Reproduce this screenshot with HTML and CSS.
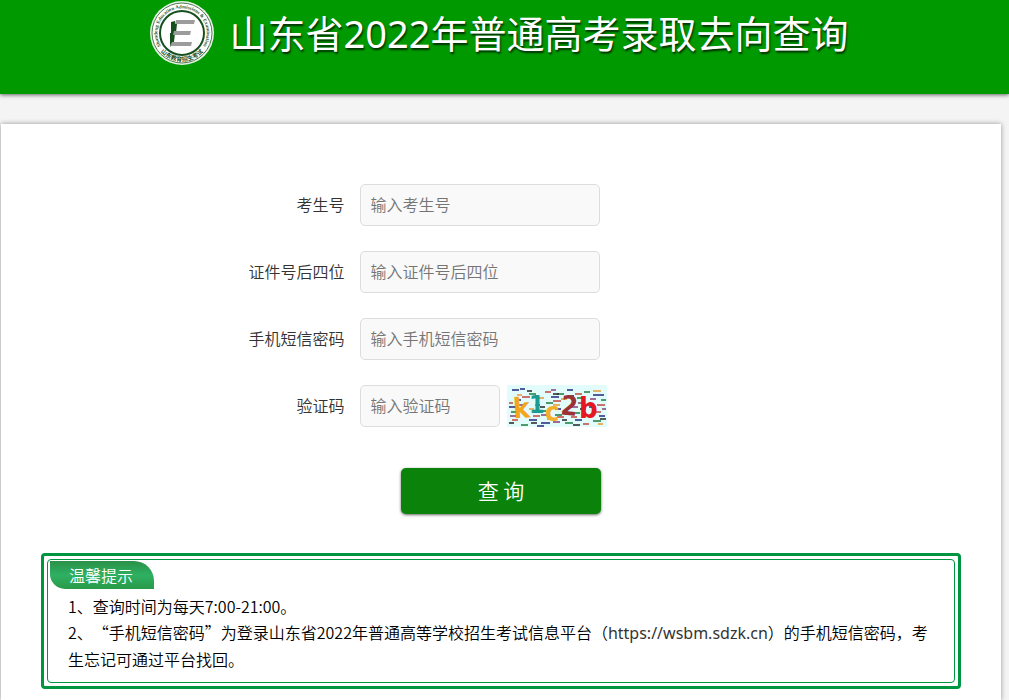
FILE: index.html
```html
<!DOCTYPE html>
<html lang="zh-CN">
<head>
    <meta charset="UTF-8">
    <meta name="viewport" content="width=device-width, initial-scale=1.0">
    <title>山东省2022年普通高考录取去向查询</title>
    <link rel="stylesheet" href="styles.css">
</head>
<body>
    <header class="header">
        <div class="header-inner">
            <svg class="logo" viewBox="0 0 66 66" aria-hidden="true">
                <defs>
                    <path id="ringTop" d="M12 46 A24.700 24.700 0 1 1 54 46"/>
                    <path id="ringBottom" d="M6 42 A28.500 28.500 0 0 0 60 42"/>
                </defs>
                <circle cx="33" cy="33" r="32" fill="#e9f3e9"/>
                <circle cx="33" cy="33" r="30" fill="#fff" stroke="#4c7a50" stroke-width="1"/>
                <circle cx="33" cy="33" r="22" fill="#fff" stroke="#17501f" stroke-width="2"/>
                <text class="logo-en"><textPath href="#ringTop" startOffset="50%" text-anchor="middle">Shandong Education Admissions &amp; Examination</textPath></text>
                <text class="logo-cn"><textPath href="#ringBottom" startOffset="50%" text-anchor="middle">山东教育招生考试</textPath></text>
                <path fill="#17501f" d="M22 22l4-1v3h2l-1 9h-5zM21 33h5l-1 9-4 5z"/>
                <path fill="#9c9c9c" d="M27 20h19l-1 4H26zM25 31h17l-1 4H24zM23 42h20l-1 4H21z"/>
            </svg>
            <h1>山东省2022年普通高考录取去向查询</h1>
        </div>
    </header>

    <main class="container">
        <form class="query-form">
            <div class="form-group">
                <label for="ksh">考生号</label>
                <input type="text" id="ksh" placeholder="输入考生号">
            </div>
            <div class="form-group">
                <label for="zjh">证件号后四位</label>
                <input type="text" id="zjh" placeholder="输入证件号后四位">
            </div>
            <div class="form-group">
                <label for="dxmm">手机短信密码</label>
                <input type="password" id="dxmm" placeholder="输入手机短信密码">
            </div>
            <div class="form-group">
                <label for="yzm">验证码</label>
                <input type="text" id="yzm" class="short" placeholder="输入验证码">
                <svg class="captcha" viewBox="0 0 100 42" role="img" aria-label="验证码">
                    <rect width="100" height="42" fill="#e2fcfc"/>
                    <g fill="none" stroke-width="1.500">
                        <path stroke="#26267a" d="M5 5h7M13 4h5M86 10h11M60 5h6M2 22h7M22 35h8M68 35h7M92 31h6M34 38h9M82 22h7M9 15h5M44 12h8M48 24h6M30 41h7"/>
                        <path stroke="#1d7a3c" d="M22 9h7M50 9h7M77 7h6M4 27h6M30 26h9M66 28h7M14 40h7M58 38h8M86 36h8M39 18h7M94 15h5M70 13h6M48 30h7"/>
                        <path stroke="#c2463c" d="M15 12h8M38 7h6M68 9h7M90 20h8M5 35h6M50 32h7M26 31h7M76 39h6M88 27h6M2 18h4M46 16h8M64 32h6"/>
                        <path stroke="#8a3b75" d="M44 5h5M10 20h6M63 22h8M46 37h7M83 14h6M3 31h7M71 18h5M28 20h5M95 24h4M34 30h6"/>
                        <path stroke="#e39a30" d="M31 13h6M54 14h6M10 10h5M40 34h6M75 31h7M91 39h5M22 24h5M86 6h8M46 20h7"/>
                        <path stroke="#252525" d="M20 6h5M46 9h6M61 11h6M33 22h5M2 38h5M24 38h6M55 35h5M93 34h6M73 24h6M66 40h7"/>
                    </g>
                    <g class="captcha-text">
                        <text x="6" y="33" fill="#f5a51c" font-size="28" transform="rotate(-4 12 24)">k</text>
                        <text x="22" y="28" fill="#1c9a91" font-size="25">1</text>
                        <text x="38" y="36" fill="#f5ae28" font-size="27">c</text>
                        <text x="54" y="30" fill="#9b3035" font-size="27" transform="rotate(6 60 20)">2</text>
                        <text x="72" y="33" fill="#e31822" font-size="29">b</text>
                    </g>
                </svg>
            </div>
            <button type="submit" class="submit-btn">查 询</button>
        </form>

        <section class="tips">
            <div class="tips-inner">
                <h2>温馨提示</h2>
                <p>1、查询时间为每天7:00-21:00。</p>
                <p>2、“手机短信密码”为登录山东省2022年普通高等学校招生考试信息平台（<a href="https://wsbm.sdzk.cn">https://wsbm.sdzk.cn</a>）的手机短信密码，考生忘记可通过平台找回。</p>
            </div>
        </section>
    </main>
</body>
</html>
```
FILE: styles.css
```css
* {
    box-sizing: border-box;
}

body {
    margin: 0;
    min-height: 100vh;
    display: flex;
    flex-direction: column;
    background: #f4f4f4;
    color: #000;
    font-family: "Noto Sans CJK SC", sans-serif;
    font-size: 16px;
    font-weight: 350;
    text-spacing-trim: space-all;
}

.header {
    background: #009900;
    padding: 0 12px 28px 0;
    box-shadow: 0 1px 4px rgba(0, 0, 0, 0.6);
}

.header-inner {
    max-width: 1000px;
    height: 66px;
    margin: 0 auto;
    display: flex;
    justify-content: center;
    align-items: center;
    gap: 15px;
}

.logo {
    width: 66px;
    height: 66px;
    flex: none;
}

.logo-en {
    font-family: "Liberation Serif", serif;
    font-size: 5px;
    font-weight: bold;
    fill: #2c5c31;
}

.logo-cn {
    font-size: 6px;
    font-weight: bold;
    fill: #17501f;
}

h1 {
    margin: 0;
    color: #fff;
    font-family: "Noto Sans", "Noto Sans CJK SC", sans-serif;
    font-size: 38px;
    font-weight: 400;
    line-height: 66px;
    white-space: nowrap;
    text-shadow: 1px 2px 2px rgba(0, 0, 0, 0.7);
}

.container {
    flex: 1;
    width: calc(100% - 9px);
    max-width: 1000px;
    margin: 30px auto 0;
    padding: 60px 40px 11px;
    background: #fff;
    box-shadow: 0 0 5px rgba(0, 0, 0, 0.4);
}

@media (max-width: 1010px) {
    .container {
        margin-left: 1px;
    }
}

.query-form {
    display: flex;
    flex-direction: column;
    gap: 25px;
}

.form-group {
    display: flex;
    align-items: center;
}

.form-group label {
    width: 33%;
    padding-bottom: 2px;
    margin-right: 15px;
    color: #333;
    text-align: right;
}

.form-group input {
    width: 240px;
    height: 42px;
    padding: 0 10px 2px;
    border: 1px solid #ddd;
    border-radius: 5px;
    background: #f9f9f9;
    color: #333;
    font: inherit;
    outline: none;
}

.form-group input:focus {
    border-color: #009900;
}

.form-group input::placeholder {
    color: #757575;
}

.form-group .short {
    width: 140px;
}

.captcha {
    width: 100px;
    height: 42px;
    margin-left: 7px;
    overflow: visible;
}

.captcha-text {
    font-family: "DejaVu Sans Condensed", "Liberation Sans", sans-serif;
    font-weight: bold;
}

.submit-btn {
    align-self: center;
    width: 200px;
    height: 46px;
    margin-top: 16px;
    padding: 0 0 3px;
    border: none;
    border-radius: 5px;
    background: #0b830b;
    color: #fff;
    font: inherit;
    font-size: 21px;
    box-shadow: 0 1px 3px rgba(0, 0, 0, 0.6);
    cursor: pointer;
}

.submit-btn:hover {
    background: #009900;
}

.tips {
    margin-top: 39px;
    padding: 3px;
    border: 3px solid #009540;
    border-radius: 4px;
}

.tips-inner {
    padding: 1px 18px 10px 2px;
    border: 1px solid #009540;
    border-radius: 4px;
}

.tips h2 {
    display: inline-block;
    margin: 0 0 4px;
    padding: 0 21px 0 19px;
    border-radius: 0 20px 0 15px;
    background: linear-gradient(#2a9148, #2eb062 50%, #2a9a48);
    color: #fff;
    font-size: 16px;
    font-weight: 350;
    line-height: 28px;
    vertical-align: top;
}

.tips p {
    margin: 0 0 0 18px;
    line-height: 26px;
}

.tips a {
    color: #333;
    font-family: "Noto Sans", sans-serif;
    font-weight: 400;
    text-decoration: none;
}
```
